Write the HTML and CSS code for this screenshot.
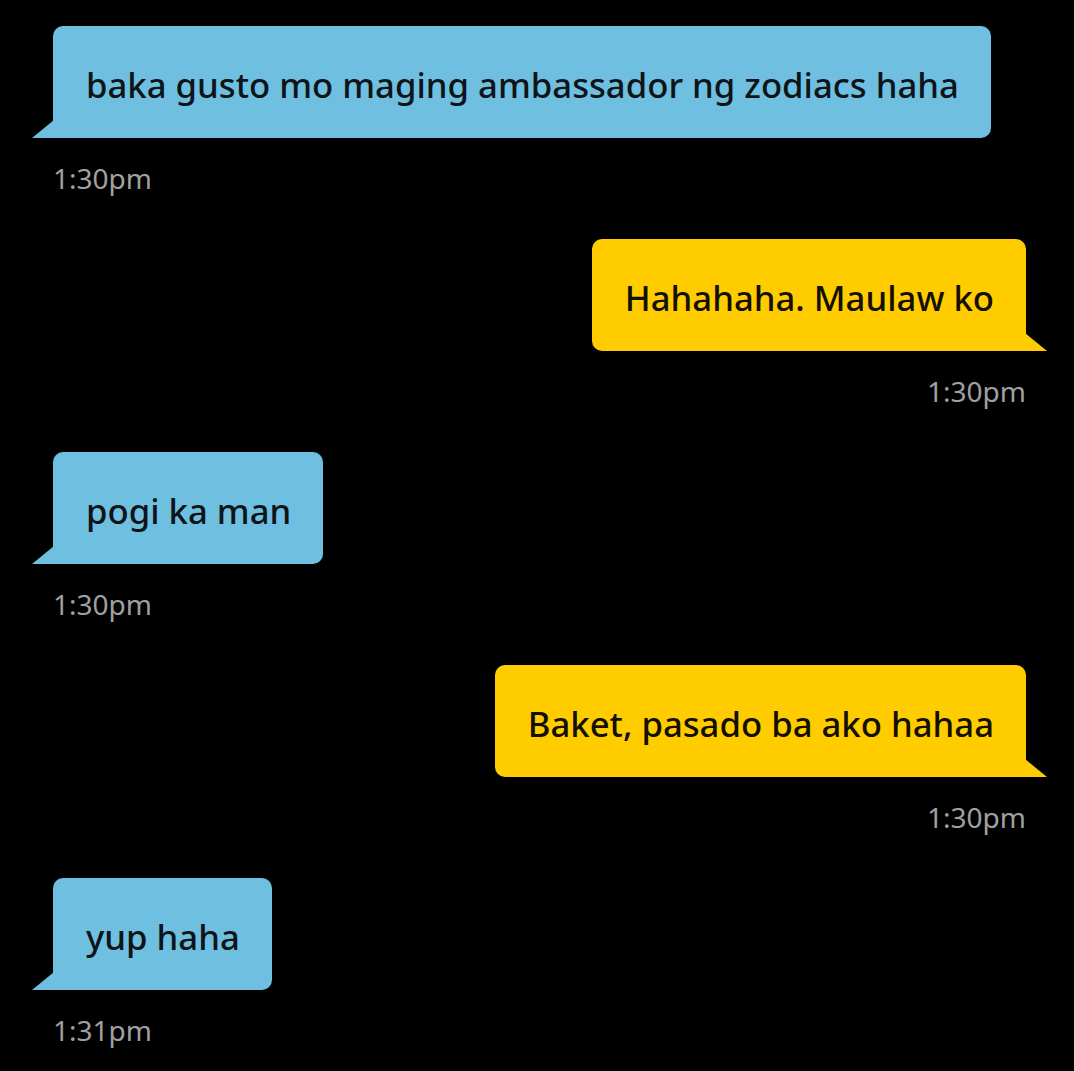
FILE: index.html
```html
<!DOCTYPE html>
<html lang="en">

<head>
    <meta charset="UTF-8">
    <meta name="viewport" content="width=device-width, initial-scale=1.0">
    <title>Chat</title>
    <link rel="stylesheet" href="styles.css">
</head>

<body>
    <div class="chat">
        <div class="message theirs">
            <div class="bubble">baka gusto mo maging ambassador ng zodiacs haha</div>
            <span class="time">1:30pm</span>
        </div>

        <div class="message mine">
            <div class="bubble">Hahahaha. Maulaw ko</div>
            <span class="time">1:30pm</span>
        </div>

        <div class="message theirs">
            <div class="bubble">pogi ka man</div>
            <span class="time">1:30pm</span>
        </div>

        <div class="message mine">
            <div class="bubble">Baket, pasado ba ako hahaa</div>
            <span class="time">1:30pm</span>
        </div>

        <div class="message theirs">
            <div class="bubble">yup haha</div>
            <span class="time">1:31pm</span>
        </div>
    </div>
</body>

</html>
```

FILE: styles.css
```css
body {
    margin: 0;
    background: #000;
    font-family: "Noto Sans", "Open Sans", sans-serif;
    -webkit-font-smoothing: antialiased;
}

.chat {
    display: flex;
    flex-direction: column;
    gap: 45px;
    padding: 26px 48px 0 53px;
    height: 1045px;
}

.message {
    display: flex;
    flex-direction: column;
}

.message.theirs {
    align-items: flex-start;
}

.message.mine {
    align-items: flex-end;
}

.bubble {
    position: relative;
    display: flex;
    align-items: center;
    height: 112px;
    box-sizing: border-box;
    padding: 4px 32px 0 33px;
    border-radius: 10px;
    font-size: 34.7px;
    font-weight: 500;
    color: #0e1418;
    white-space: nowrap;
}

.theirs .bubble {
    background: #6ebfe0;
    border-bottom-left-radius: 0;
}

.mine .bubble {
    background: #ffcc00;
    color: #141000;
    border-bottom-right-radius: 0;
}

/* little tail on the bubble corner */
.bubble::after {
    content: "";
    position: absolute;
    bottom: 0;
    width: 22px;
    height: 18px;
}

.theirs .bubble::after {
    left: -21px;
    background: #6ebfe0;
    clip-path: polygon(0 100%, 100% 0, 100% 100%);
}

.mine .bubble::after {
    right: -21px;
    background: #ffcc00;
    clip-path: polygon(0 0, 100% 100%, 0 100%);
}

.time {
    margin-top: 24px;
    line-height: 32px;
    font-size: 28px;
    color: #a0a0a0;
}
```
